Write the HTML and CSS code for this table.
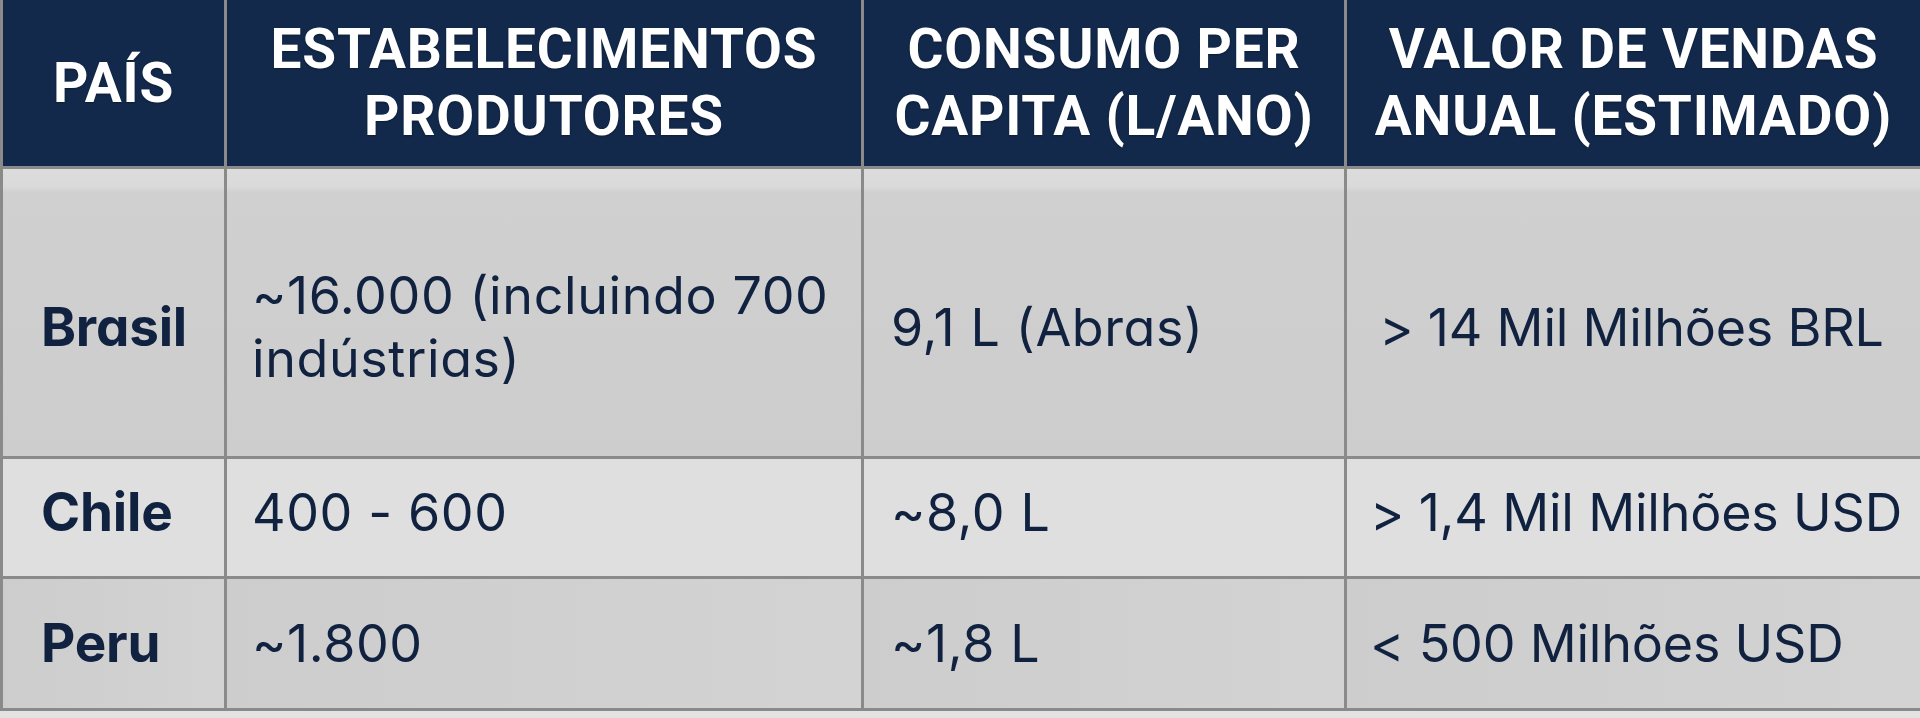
FILE: index.html
```html
<!DOCTYPE html>
<html lang="pt">
<head>
<meta charset="utf-8">
<title>Tabela</title>
<link rel="stylesheet" href="styles.css">
</head>
<body>
<div class="table">
  <div class="cell head">PAÍS</div>
  <div class="cell head">ESTABELECIMENTOS<br>PRODUTORES</div>
  <div class="cell head">CONSUMO PER<br>CAPITA (L/ANO)</div>
  <div class="cell head">VALOR DE VENDAS<br>ANUAL (ESTIMADO)</div>

  <div class="cell label row-br">Brasil</div>
  <div class="cell data row-br">~16.000 (incluindo 700<br>indústrias)</div>
  <div class="cell data row-br col3">9,1 L (Abras)</div>
  <div class="cell data row-br col4 centered">&gt; 14 Mil Milhões BRL</div>

  <div class="cell label row-cl">Chile</div>
  <div class="cell data row-cl">400 - 600</div>
  <div class="cell data row-cl col3">~8,0 L</div>
  <div class="cell data row-cl col4">&gt; 1,4 Mil Milhões USD</div>

  <div class="cell label row-pe">Peru</div>
  <div class="cell data row-pe">~1.800</div>
  <div class="cell data row-pe col3">~1,8 L</div>
  <div class="cell data row-pe col4">&lt; 500 Milhões USD</div>
</div>
</body>
</html>
```
FILE: styles.css
```css
html, body {
  margin: 0;
  padding: 0;
}

body {
  background: #e3e3e3;
  font-family: "Inter", "Noto Sans", sans-serif;
  font-feature-settings: "cv11" 1;
  color: #10223f;
  width: 1920px;
  height: 718px;
  overflow: hidden;
}

.table {
  display: grid;
  grid-template-columns: 221px 634px 480px 1fr;
  grid-template-rows: 166px 287px 117px 129px;
  gap: 3px;
  padding: 0 0 3px 3px;
  background: #8a8a8a;
}

.cell {
  display: flex;
  align-items: center;
  box-sizing: border-box;
  white-space: nowrap;
}

.head {
  background: #13294b;
  color: #ffffff;
  justify-content: center;
  text-align: center;
  font-family: "Roboto", "Open Sans", sans-serif;
  font-weight: 700;
  font-size: 55px;
  line-height: 67px;
  letter-spacing: 0.8px;
  text-shadow: 0 1px 2px rgba(0, 0, 0, 0.35);
}

.label {
  padding-left: 38px;
  font-weight: 700;
  font-size: 53px;
  line-height: 63px;
  letter-spacing: -0.2px;
}

.data {
  padding-left: 25px;
  font-weight: 400;
  font-size: 52px;
  line-height: 63px;
  letter-spacing: 0.6px;
}

.col3 {
  padding-left: 27px;
}

.col4 {
  padding-left: 23px;
  letter-spacing: -0.2px;
}

.centered {
  justify-content: center;
  padding-left: 0;
  padding-right: 4px;
}

.row-br {
  background: linear-gradient(to bottom, #dcdcdc 0, #dadada 17px, #d0d0d0 24px, #cdcdcd 100%);
  padding-top: 29px;
}

.row-cl {
  background: #dfdfdf;
  padding-bottom: 10px;
}

.row-pe {
  background: linear-gradient(to right, #cdcdcd, #d3d3d3);
}
```
